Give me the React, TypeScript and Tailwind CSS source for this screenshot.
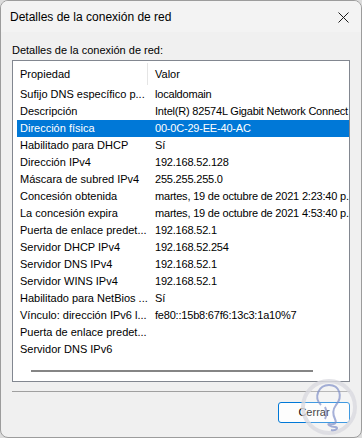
import React from "react";

const rows: [string, string][] = [
  ["Sufijo DNS específico p...", "localdomain"],
  ["Descripción", "Intel(R) 82574L Gigabit Network Connect"],
  ["Dirección física", "00-0C-29-EE-40-AC"],
  ["Habilitado para DHCP", "Sí"],
  ["Dirección IPv4", "192.168.52.128"],
  ["Máscara de subred IPv4", "255.255.255.0"],
  ["Concesión obtenida", "martes, 19 de octubre de 2021 2:23:40 p."],
  ["La concesión expira", "martes, 19 de octubre de 2021 4:53:40 p."],
  ["Puerta de enlace predet...", "192.168.52.1"],
  ["Servidor DHCP IPv4", "192.168.52.254"],
  ["Servidor DNS IPv4", "192.168.52.1"],
  ["Servidor WINS IPv4", "192.168.52.1"],
  ["Habilitado para NetBios ...", "Sí"],
  ["Vínculo: dirección IPv6 l...", "fe80::15b8:67f6:13c3:1a10%7"],
  ["Puerta de enlace predet...", ""],
  ["Servidor DNS IPv6", ""],
];

export default function App() {
  return (
    <div className="w-[362px] h-[438px] bg-[#dcdcdc]" style={{ fontFamily: '"Liberation Sans", Arial, sans-serif' }}>
      <div className="relative w-[362px] h-[438px] rounded-[8px] border border-[#9c9c9c] bg-[#f0f0f0] flex flex-col overflow-hidden text-[11px] text-black">
        <div className="h-[31px] flex items-center justify-between pl-[9px] pr-[12px] bg-[#f3f3f3]">
          <span className="text-[12px] leading-none pt-[1px]">Detalles de la conexión de red</span>
          <svg width="11" height="11" viewBox="0 0 11 11" className="mt-[1px]">
            <path d="M0.5 0.5 L10.5 10.5 M10.5 0.5 L0.5 10.5" stroke="#1a1a1a" strokeWidth="1" />
          </svg>
        </div>
        <div className="pl-[11px] mt-[11px] leading-[14px]">Detalles de la conexión de red:</div>
        <div className="mx-[11px] mt-[3px] h-[322px] border border-[#828790] bg-white flex flex-col relative overflow-hidden">
          <div className="h-[25px] flex items-center shrink-0">
            <div className="w-[134px] pl-[7px] pt-[1px]">Propiedad</div>
            <div className="w-px h-[22px] bg-[#e5e5e5] mt-[1px]"></div>
            <div className="pl-[7px] pt-[1px]">Valor</div>
          </div>
          <div className="flex flex-col pl-[4px]">
            {rows.map(([k, v], i) => {
              const sel = i === 2;
              return (
                <div
                  key={i}
                  className={
                    "h-[17px] flex items-center whitespace-nowrap overflow-hidden " +
                    (sel ? "bg-[#0078d7] text-white" : "")
                  }
                >
                  <div className="w-[137px] shrink-0 pl-[3px]">{k}</div>
                  <div className="pl-[1px] tracking-[-0.2px]">{v}</div>
                </div>
              );
            })}
          </div>
          <div className="absolute left-[18px] bottom-[9px] w-[282px] h-[2px] bg-[#858585]"></div>
        </div>
        <div className="mx-[11px] mt-[9px] h-px bg-[#a0a0a0]"></div>
        <div className="flex justify-end pr-[11px] mt-[10px]">
          <button className="w-[72px] h-[21px] rounded-[3px] border border-[#0078d7] bg-[#fdfdfd] text-[11px] leading-none flex items-center justify-center">
            Cerrar
          </button>
        </div>
        <svg
          width="60"
          height="64"
          viewBox="0 0 60 64"
          className="absolute left-[298px] top-[374px] pointer-events-none"
        >
          <circle cx="30" cy="32" r="26" fill="white" fillOpacity="0.25" stroke="#d9d9e0" strokeWidth="4" strokeOpacity="0.8" />
          <path
            d="M22 30 C14 22 20 10 30 10 C41 10 44 22 37 30 C34 34 33 38 36 44 C38 48 36 50 30 49 C28 49 31 52 36 52 C40 52 38 56 32 55 M26 32 C28 36 28 40 26 44"
            fill="none"
            stroke="#7f8fc8"
            strokeWidth="2"
            strokeOpacity="0.7"
          />
        </svg>
      </div>
    </div>
  );
}
